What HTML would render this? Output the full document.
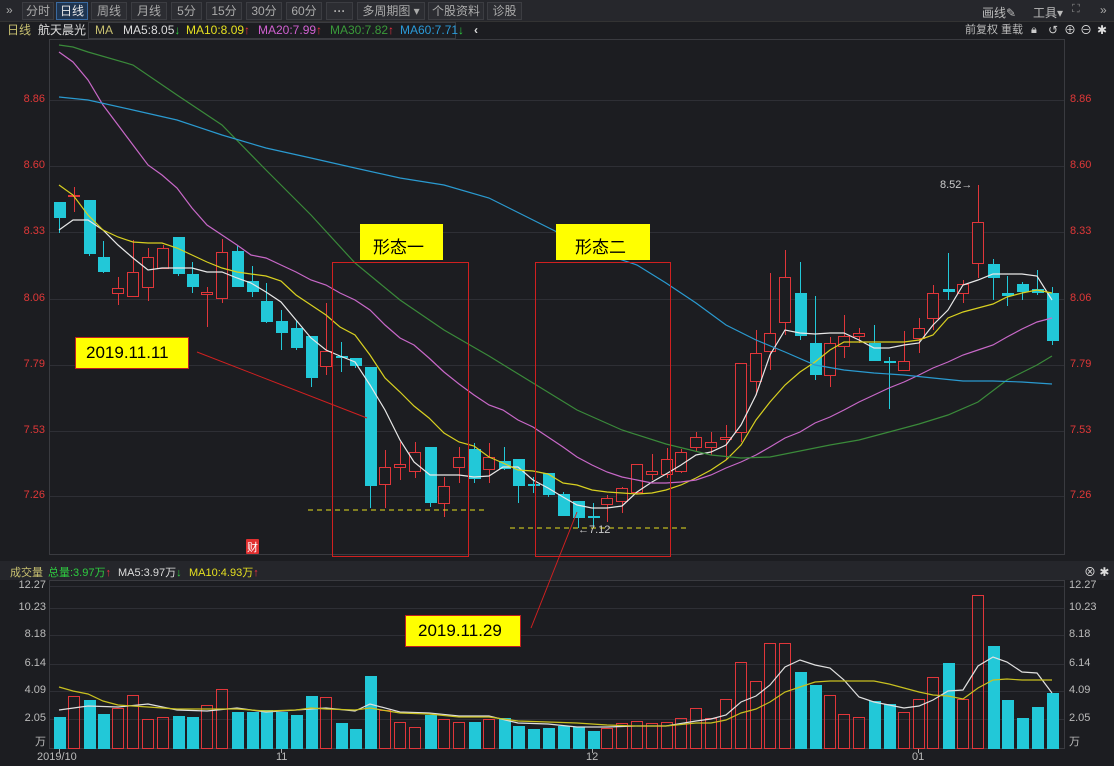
<!DOCTYPE html>
<html><head><meta charset="utf-8">
<style>
*{margin:0;padding:0;box-sizing:border-box}
body{width:1114px;height:766px;background:#1c1d21;overflow:hidden;font-family:"Liberation Sans","Noto Sans CJK SC",sans-serif;position:relative;color:#ccc}
.bar1{position:absolute;left:0;top:0;width:1114px;height:22px;background:#26272c;border-bottom:1px solid #333}
.btn{position:absolute;top:2px;height:18px;border:1px solid #3c3d42;background:#2c2d32;color:#aaa;font-size:12px;line-height:16px;text-align:center}
.bar2{position:absolute;left:0;top:22px;width:1114px;height:17px;background:#1c1d21;font-size:12px;line-height:17px}
.t{position:absolute;white-space:nowrap}
svg{position:absolute;left:0;top:0}
</style></head><body>
<div class="bar1">
<div class="t" style="left:6px;top:3px;font-size:12px;color:#aaa">»</div>
<div class="btn" style="left:22px;width:32px">分时</div>
<div class="btn" style="left:56px;width:32px;background:#1f3550;border-color:#3a6aa0;color:#e8e8e8">日线</div>
<div class="btn" style="left:91px;width:36px">周线</div>
<div class="btn" style="left:131px;width:36px">月线</div>
<div class="btn" style="left:171px;width:31px">5分</div>
<div class="btn" style="left:206px;width:36px">15分</div>
<div class="btn" style="left:246px;width:36px">30分</div>
<div class="btn" style="left:286px;width:36px">60分</div>
<div class="btn" style="left:326px;width:27px;font-weight:bold">···</div>
<div class="btn" style="left:357px;width:68px">多周期图 ▾</div>
<div class="btn" style="left:428px;width:56px">个股资料</div>
<div class="btn" style="left:487px;width:35px">诊股</div>
<div class="t" style="left:982px;top:4px;font-size:12px;color:#bbb">画线✎</div>
<div class="t" style="left:1033px;top:4px;font-size:12px;color:#bbb">工具▾</div>
<div class="t" style="left:1072px;top:3px;font-size:11px;color:#888">⛶</div>
<div class="t" style="left:1100px;top:3px;font-size:12px;color:#aaa">»</div>
</div>
<div class="bar2">
<span class="t" style="left:7px;color:#c8c070">日线</span>
<span class="t" style="left:38px;color:#ddd">航天晨光</span>
<div style="position:absolute;left:88px;top:0;width:368px;height:17px;border:1px solid #3a3b40"></div>
<span class="t" style="left:95px;color:#c8c070">MA</span>
<span class="t" style="left:123px;color:#ddd">MA5:8.05<span style="color:#2ecc40">↓</span></span>
<span class="t" style="left:186px;color:#e6e020">MA10:8.09<span style="color:#f03040">↑</span></span>
<span class="t" style="left:258px;color:#d060d0">MA20:7.99<span style="color:#f03040">↑</span></span>
<span class="t" style="left:330px;color:#3a9a3a">MA30:7.82<span style="color:#f03040">↑</span></span>
<span class="t" style="left:400px;color:#2a9ad8">MA60:7.71<span style="color:#2ecc40">↓</span></span>
<span class="t" style="left:474px;color:#ddd;font-weight:bold">‹</span>
<span class="t" style="left:965px;color:#bbb;font-size:11px">前复权 重载</span>
<span class="t" style="left:1031px;color:#ccc;font-size:11px">🔒︎</span>
<span class="t" style="left:1048px;color:#ccc;font-size:12px">↺</span>
<span class="t" style="left:1064px;color:#ddd;font-size:12px">⊕</span>
<span class="t" style="left:1080px;color:#ddd;font-size:12px">⊖</span>
<span class="t" style="left:1097px;color:#ddd;font-size:12px">✱</span>
</div>

<svg id="s" width="1114" height="766" xmlns="http://www.w3.org/2000/svg" style="top:0">
<rect x="0" y="561" width="1114" height="19" fill="#25262b"/>
<g id="grid" stroke="#2e2f35" stroke-width="1"></g>
<rect x="49.5" y="39.5" width="1015" height="515" fill="none" stroke="#3a3b40"/>
<rect x="49.5" y="580.5" width="1015" height="168" fill="none" stroke="#3a3b40"/>
<g id="vol"></g>
<g id="cand"></g>
<g id="lines" fill="none" stroke-width="1.2"></g>
<!-- annotations -->
<rect x="332.5" y="262.5" width="136" height="294" fill="none" stroke="#d02020"/>
<rect x="535.5" y="262.5" width="135" height="294" fill="none" stroke="#d02020"/>
<line x1="308" y1="510" x2="487" y2="510" stroke="#e6e020" stroke-dasharray="5,4"/>
<line x1="510" y1="528" x2="690" y2="528" stroke="#e6e020" stroke-dasharray="5,4"/>
<line x1="197" y1="352" x2="367" y2="418" stroke="#d02020"/>
<line x1="531" y1="628" x2="577" y2="512" stroke="#d02020"/>
<rect x="360" y="224" width="83" height="36" fill="#ffff00"/>
<rect x="556" y="224" width="94" height="36" fill="#ffff00"/>
<rect x="75.5" y="337.5" width="113" height="31" fill="#ffff00" stroke="#c02020"/>
<rect x="405.5" y="615.5" width="115" height="31" fill="#ffff00" stroke="#c02020"/>
<rect x="246" y="539" width="13" height="15" fill="#e03030" rx="1"/>
</svg>
<div class="t" style="left:373px;top:233px;font-size:17px;color:#000">形态一</div>
<div class="t" style="left:575px;top:233px;font-size:17px;color:#000">形态二</div>
<div class="t" style="left:86px;top:343px;font-size:17px;color:#000">2019.11.11</div>
<div class="t" style="left:418px;top:621px;font-size:17px;color:#000">2019.11.29</div>
<div class="t" style="left:247px;top:539px;font-size:11px;color:#fff">财</div>
<div class="t" style="left:940px;top:179px;font-size:11px;color:#ccc">8.52→</div>
<div class="t" style="left:578px;top:524px;font-size:11px;color:#ccc">←7.12</div>
<div class="t" style="left:10px;top:564px;font-size:11px;color:#c8c070">成交量</div>
<div class="t" style="left:48px;top:564px;font-size:11px;color:#2ecc40">总量:3.97万<span style="color:#f03040">↑</span></div>
<div class="t" style="left:118px;top:564px;font-size:11px;color:#ddd">MA5:3.97万<span style="color:#2ecc40">↓</span></div>
<div class="t" style="left:189px;top:564px;font-size:11px;color:#e6e020">MA10:4.93万<span style="color:#f03040">↑</span></div>
<div class="t" style="left:1084px;top:563px;font-size:12px;color:#ddd">⊗ ✱</div>
<div id="labels"></div>
<script>
var NS="http://www.w3.org/2000/svg";
function el(p,t,a){var e=document.createElementNS(NS,t);for(var k in a)e.setAttribute(k,a[k]);p.appendChild(e);return e;}
var grid=document.getElementById('grid');
var L=document.getElementById('labels');
function lab(x,y,txt,c,align){var d=document.createElement('div');d.className='t';d.style.cssText='top:'+(y-7)+'px;font-size:11px;color:'+c+';'+(align=='r'?'right:'+(1114-x)+'px':'left:'+x+'px');d.textContent=txt;L.appendChild(d);}
var py=[[100,'8.86'],[166,'8.60'],[232,'8.33'],[299,'8.06'],[365,'7.79'],[431,'7.53'],[496,'7.26']];
py.forEach(function(p){el(grid,'line',{x1:50,x2:1064,y1:p[0]+.5,y2:p[0]+.5});lab(45,p[0],p[1],'#e03838','r');lab(1070,p[0],p[1],'#e03838');});
var vy=[[586,'12.27'],[608,'10.23'],[635,'8.18'],[664,'6.14'],[691,'4.09'],[719,'2.05']];
vy.forEach(function(p){el(grid,'line',{x1:50,x2:1064,y1:p[0]+.5,y2:p[0]+.5});lab(46,p[0],p[1],'#bbb','r');lab(1069,p[0],p[1],'#bbb');});
lab(35,740,'万','#bbb');lab(1069,740,'万','#bbb');
[[59,'2019/10',-22],[281,'11',-5],[592,'12',-6],[918,'01',-6]].forEach(function(d){el(grid,'line',{x1:d[0]+.5,x2:d[0]+.5,y1:749,y2:753,stroke:'#aaa'});lab(d[0]+d[2],758,d[1],'#bbb');});
// candles: [type(1 up red,0 down cyan), top, bottom, hi, lo]
var C=[[0,202,218,202,233],[1,195,196,187,212],[0,200,254,200,256],[0,257,272,241,273],[1,288,293,277,305],[1,272,296,240,297],[1,257,287,248,301],[1,248,268,245,268],[0,237,274,237,276],[0,274,287,262,293],[1,292,294,287,327],[1,252,298,239,303],[0,251,287,246,287],[0,281,292,266,297],[0,301,322,283,323],[0,321,333,310,350],[0,328,348,320,350],[0,336,378,336,387],[1,351,366,303,375],[0,356,358,342,372],[0,358,366,358,368],[0,367,486,367,508],[1,467,484,450,508],
[1,464,467,442,480],[1,452,471,442,478],[0,447,503,447,507],[1,486,503,477,517],[1,457,467,447,483],[0,449,479,443,483],[1,457,469,443,483],[0,461,469,447,470],[0,459,486,459,503],[0,484,486,477,493],[0,473,495,473,497],[0,494,516,492,516],[0,501,518,501,528],[0,516,518,503,528],[1,498,504,495,522],[1,488,501,487,513],[1,464,492,464,494],[1,471,474,454,480],[1,459,474,448,478],[1,452,471,449,473],[1,437,447,432,452],[1,442,447,432,455],
[1,437,439,425,460],[1,363,432,363,442],[1,353,381,330,395],[1,333,351,273,370],[1,277,322,250,335],[0,293,336,262,340],[0,343,375,296,380],[1,343,375,337,387],[1,336,346,315,358],[1,333,336,328,343],[0,343,361,325,361],[0,361,363,357,409],[1,361,370,331,370],[1,328,338,318,353],[1,293,318,285,330],[0,289,292,253,300],[1,284,293,280,303],[1,222,263,185,278],[0,264,278,259,300],[0,293,296,276,306],[0,284,292,282,300],[0,289,293,270,295],[0,293,341,287,345]];
var V=[717,696,700,714,708,695,719,717,716,717,705,689,712,712,710,712,715,696,697,723,729,676,710,722,727,715,719,722,722,719,718,726,729,728,726,727,731,728,723,721,723,722,718,708,718,699,662,681,643,643,672,685,695,714,717,701,704,712,699,677,663,699,595,646,700,718,707,693];
var cg=document.getElementById('cand'),vg=document.getElementById('vol');
var RED='#e0363a',CY='#22c8d8';
C.forEach(function(c,i){var x=Math.round(59+14.82*i);var col=c[0]?RED:CY;
 el(cg,'line',{x1:x+.5,x2:x+.5,y1:c[3],y2:c[4],stroke:col});
 var h=Math.max(c[2]-c[1],1);
 if(c[0])el(cg,'rect',{x:x-5.5,y:c[1]+.5,width:11,height:h,fill:'#1c1d21',stroke:col});
 else el(cg,'rect',{x:x-5,y:c[1],width:12,height:Math.max(h,2),fill:col});
 var vt=V[i];
 if(c[0])el(vg,'rect',{x:x-5.5,y:vt+.5,width:11,height:748-vt,fill:'none',stroke:RED});
 else el(vg,'rect',{x:x-5,y:vt,width:12,height:749-vt,fill:CY});
});
var lg=document.getElementById('lines');
function pl(pts,col){el(lg,'polyline',{points:pts,stroke:col});}
pl("59,230 73,220 88,220 103,230 118,245 133,258 148,270 162,268 192,268 207,272 222,272 237,278 251,283 266,292 281,302 296,320 311,338 326,350 340,356 355,362 370,385 385,410 400,440 414,462 430,475 459,475 474,477 489,476 503,467 518,467 533,480 548,488 563,497 577,505 592,508 607,508 622,506 637,492 652,482 666,474 681,465 696,455 711,452 726,445 741,425 756,395 770,355 785,330 800,333 815,334 830,333 844,333 859,340 874,348 889,348 904,345 919,343 933,325 948,310 963,285 978,280 993,274 1007,274 1022,274 1037,276 1052,300","#e8e8e8");
pl("59,185 73,195 88,215 103,230 118,237 133,242 148,243 162,243 177,248 192,255 207,262 222,268 237,272 251,274 266,276 281,281 296,295 311,305 326,315 340,327 355,335 370,355 385,378 400,392 414,406 429,418 444,433 459,442 474,446 489,457 503,463 518,470 533,471 548,474 563,483 577,485 592,490 607,492 622,493 637,494 652,493 666,490 681,485 696,478 711,470 726,460 741,445 756,420 770,402 785,385 800,372 815,362 830,350 844,342 859,342 874,342 889,342 904,342 919,340 933,335 948,318 963,312 978,308 993,304 1007,297 1022,293 1037,290 1052,293","#d8d020");
pl("59,52 73,62 88,80 103,105 118,125 133,145 148,165 162,175 177,188 192,208 207,225 222,235 237,245 251,255 266,258 281,265 296,272 311,280 326,285 340,293 355,300 370,310 385,325 400,338 414,345 429,358 444,372 459,384 474,395 489,405 503,410 518,420 533,427 548,437 563,447 577,457 592,465 607,472 622,477 637,480 652,483 666,483 681,482 696,480 711,475 726,468 741,462 756,455 770,447 785,438 800,432 815,423 830,417 844,410 859,402 874,395 889,388 904,382 919,375 933,368 948,362 963,355 978,350 993,345 1007,337 1022,329 1037,322 1052,318","#c868c8");
pl("59,45 73,47 88,52 133,65 177,95 222,125 266,170 311,215 355,263 400,300 444,330 489,356 533,383 577,410 622,430 666,444 711,455 741,458 770,457 800,451 830,445 859,440 889,432 919,424 948,415 978,402 1007,380 1037,365 1052,356","#3a8a3a");
pl("59,97 88,100 133,110 177,120 222,135 266,148 311,158 355,168 400,178 444,185 489,198 533,220 563,235 592,250 637,265 666,283 696,303 726,325 756,340 785,352 815,365 844,370 874,373 904,375 933,378 963,381 993,381 1022,382 1052,384","#2a9ad0");
pl("59,710 88,706 118,707 148,704 177,710 207,711 237,708 266,712 296,710 326,708 355,711 370,704 400,712 429,713 459,716 489,716 518,723 548,724 577,727 607,727 637,726 666,726 696,721 711,719 726,715 741,702 756,696 770,685 785,667 800,660 815,665 830,668 844,680 859,697 874,702 889,705 904,708 919,706 933,700 948,691 963,690 978,666 993,657 1007,662 1022,672 1037,673 1052,693","#e0e0e0");
pl("59,687 73,691 88,694 103,701 118,705 148,707 177,709 207,709 237,709 266,711 296,710 311,708 326,709 355,710 370,708 400,713 429,714 459,717 489,717 518,721 548,722 577,723 607,725 637,726 666,726 696,723 711,723 726,720 741,713 756,709 770,702 785,692 800,687 815,682 830,681 859,681 874,681 889,684 904,688 919,692 933,695 948,696 963,699 978,688 993,680 1007,679 1022,680 1037,680 1052,680","#c8c020");
</script>
</body></html>
